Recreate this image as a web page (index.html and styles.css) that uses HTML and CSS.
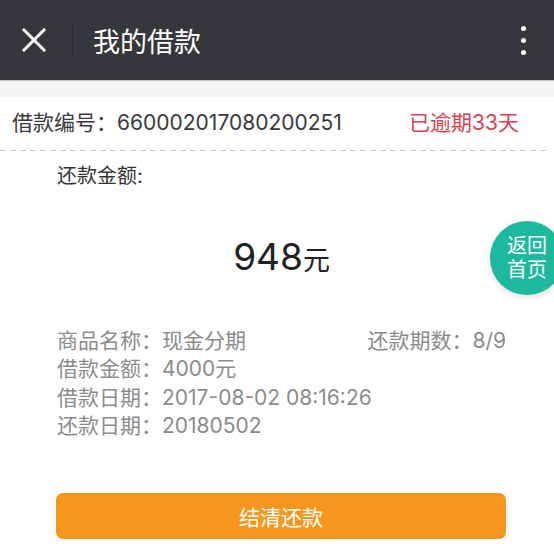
FILE: index.html
```html
<!DOCTYPE html>
<html lang="zh-CN">
<head>
    <meta charset="UTF-8">
    <meta name="viewport" content="width=device-width, initial-scale=1.0">
    <title>我的借款</title>
    <link rel="stylesheet" href="styles.css">
</head>
<body>
    <header class="topbar">
        <button class="close-btn" aria-label="关闭">
            <svg width="24" height="24" viewBox="0 0 24 24">
                <path d="M2 2 L22 22 M22 2 L2 22" stroke="#fff" stroke-width="3" stroke-linecap="square" fill="none"/>
            </svg>
        </button>
        <h1 class="title">我的借款</h1>
        <button class="more-btn" aria-label="更多">
            <span></span><span></span><span></span>
        </button>
    </header>

    <div class="strip"></div>

    <div class="loan-head">
        <span class="loan-no">借款编号：660002017080200251</span>
        <span class="overdue">已逾期33天</span>
    </div>
    <div class="dashed"></div>

    <main class="content">
        <p class="amount-label">还款金额:</p>
        <p class="amount">948<span class="unit">元</span></p>

        <div class="info">
            <div class="info-row">
                <span>商品名称：现金分期</span>
                <span>还款期数：8/9</span>
            </div>
            <div class="info-row">借款金额：4000元</div>
            <div class="info-row">借款日期：2017-08-02 08:16:26</div>
            <div class="info-row">还款日期：20180502</div>
        </div>

        <button class="pay-btn">结清还款</button>
    </main>

    <a class="home-bubble" href="#">返回<br>首页</a>
</body>
</html>
```

FILE: styles.css
```css
:root {
    --bar-bg: #36373c;
    --text-dark: #333;
    --text-gray: #8c8c8c;
    --red: #d8424f;
    --orange: #f6971d;
    --teal: #1db99f;
}

* {
    box-sizing: border-box;
    margin: 0;
    padding: 0;
}

body {
    font-family: Inter, "Noto Sans CJK SC", sans-serif;
    background: #fff;
    color: var(--text-dark);
    width: 554px;
    height: 547px;
    overflow: hidden;
    position: relative;
}

button {
    border: none;
    background: none;
    font-family: inherit;
    cursor: pointer;
}

/* top bar */
.topbar {
    height: 80px;
    background: var(--bar-bg);
    display: flex;
    align-items: center;
}

.close-btn {
    width: 73px;
    height: 36px;
    padding-left: 22px;
    display: flex;
    align-items: center;
    border-right: 1px solid #2b2c30;
}

.title {
    margin-left: 20px;
    color: #fff;
    font-size: 27px;
    font-weight: 400;
}

.more-btn {
    margin-left: auto;
    margin-right: 28px;
    display: flex;
    flex-direction: column;
    gap: 7px;
    padding: 0;
}

.more-btn span {
    width: 5px;
    height: 5px;
    border-radius: 50%;
    background: #fff;
}

.strip {
    height: 18px;
    background: #f5f5f5;
    border-top: 1px solid #c4c4c4;
}

/* loan number */
.loan-head {
    height: 52px;
    padding: 0 35px 6px 12px;
    display: flex;
    justify-content: space-between;
    align-items: center;
    font-size: 21px;
}

.loan-no {
    color: #3a3a3a;
}

.overdue {
    color: var(--red);
}

.dashed {
    height: 1px;
    margin-right: 8px;
    background: repeating-linear-gradient(to right, #c6c6c6 0 6px, transparent 6px 10px);
}

/* body */
.content {
    padding: 11px 48px 0 57px;
}

.amount-label {
    font-size: 20px;
    line-height: 28px;
    color: #333;
}

.amount {
    margin-top: 42px;
    text-align: center;
    font-size: 37px;
    line-height: 50px;
    color: #222;
}

.amount .unit {
    font-size: 27px;
}

.info {
    margin-top: 41px;
    color: var(--text-gray);
    font-size: 21px;
    line-height: 28.4px;
}

.info-row {
    display: flex;
    justify-content: space-between;
}

.pay-btn {
    display: block;
    width: 450px;
    height: 46px;
    margin-top: 52px;
    margin-left: -1px;
    border-radius: 7px;
    background: var(--orange);
    color: #fff;
    font-size: 21px;
}

/* floating home bubble */
.home-bubble {
    position: absolute;
    left: 490px;
    top: 221px;
    width: 74px;
    height: 74px;
    border-radius: 50%;
    background: var(--teal);
    box-shadow: 0 2px 6px rgba(0, 0, 0, 0.15);
    color: #fff;
    text-decoration: none;
    font-size: 20px;
    line-height: 24px;
    padding: 13px 0 0 17px;
}
```
